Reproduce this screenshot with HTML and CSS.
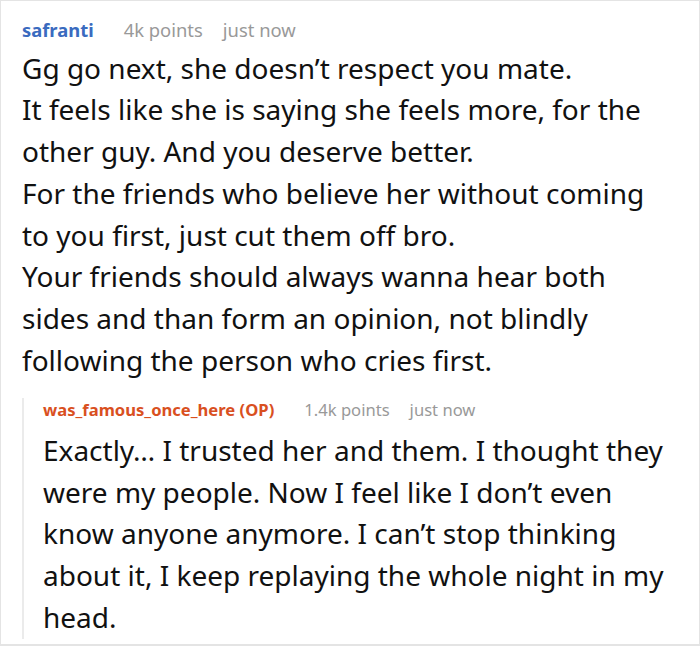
FILE: index.html
```html
<!DOCTYPE html>
<html>
<head>
<meta charset="utf-8">
<link rel="stylesheet" href="styles.css">
</head>
<body>
<div class="card">
  <div class="comment">
    <div class="meta">
      <span class="author">safranti</span>
      <span class="points">4k points</span>
      <span class="time">just now</span>
    </div>
    <div class="text">Gg go next, she doesn’t respect you mate.<br>It feels like she is saying she feels more, for the other guy. And you deserve better.<br>For the friends who believe her without coming to you first, just cut them off bro.<br>Your friends should always wanna hear both sides and than form an opinion, not blindly following the person who cries first.</div>
    <div class="reply">
      <div class="meta meta-small">
        <span class="author op">was_famous_once_here (OP)</span>
        <span class="points">1.4k points</span>
        <span class="time">just now</span>
      </div>
      <div class="text reply-text">Exactly… I trusted her and them. I thought they were my people. Now I feel like I don’t even know anyone anymore. I can’t stop thinking about it, I keep replaying the whole night in my head.</div>
    </div>
  </div>
</div>
</body>
</html>
```

FILE: styles.css
```css
html, body {
  margin: 0;
  padding: 0;
  background: #fff;
}
.card {
  box-sizing: border-box;
  width: 700px;
  height: 646px;
  border: 1px solid #e4e4e4;
  border-bottom-width: 2px;
  padding: 17px 21px 0 21px;
  font-family: "Noto Sans", sans-serif;
  color: #111;
  overflow: hidden;
}
.meta {
  display: flex;
  align-items: baseline;
  gap: 20px;
  font-size: 18.4px;
  line-height: 24px;
  color: #999;
}
.meta-small {
  font-size: 16.6px;
  margin-top: -11.7px;
}
.author {
  font-weight: 700;
  color: #3a6bbf;
  margin-right: 10px;
}
.author.op {
  color: #d9501f;
}
.text {
  font-size: 28px;
  line-height: 41.75px;
  margin-top: 5.6px;
}
.reply {
  margin-top: 28.4px;
  border-left: 2px solid #ebebeb;
  padding-left: 19px;
}
.reply-text {
  margin-top: 7.7px;
  margin-bottom: -11.75px;
}
```
